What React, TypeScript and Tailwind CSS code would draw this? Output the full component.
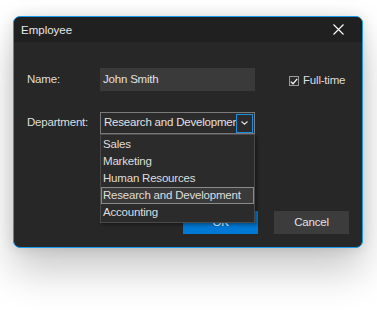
import React from "react";

const departments = [
  "Sales",
  "Marketing",
  "Human Resources",
  "Research and Development",
  "Accounting",
];

const selected = "Research and Development";

function CloseIcon() {
  return (
    <svg width="11" height="11" viewBox="0 0 11 11" aria-hidden>
      <path d="M0.5 0.5L10.5 10.5M10.5 0.5L0.5 10.5" stroke="#ffffff" strokeWidth="1.1" />
    </svg>
  );
}

function Chevron() {
  return (
    <svg width="7" height="4" viewBox="0 0 7 4" aria-hidden>
      <path d="M0.5 0.5L3.5 3.2L6.5 0.5" stroke="#e0e0e0" strokeWidth="1.1" fill="none" />
    </svg>
  );
}

function Check() {
  return (
    <svg width="8" height="7" viewBox="0 0 8 7" aria-hidden>
      <path d="M0.8 3.6L3 5.8L7.2 0.8" stroke="#ffffff" strokeWidth="1.3" fill="none" />
    </svg>
  );
}

export default function App() {
  return (
    <div
      className="h-[318px] w-[377px] overflow-hidden bg-white pl-[13px] pt-[16px] text-[11.5px] tracking-[-0.2px] text-[#dedede]"
      style={{ fontFamily: '"Liberation Sans", Arial, sans-serif' }}
    >
      <div className="relative flex h-[232px] w-[350px] flex-col overflow-visible rounded-[7px] border border-[#1a9af0] bg-[#272727] shadow-[0_22px_40px_rgba(0,0,0,0.22),0_0_14px_rgba(0,0,0,0.12)]">
        {/* Title bar */}
        <div className="flex h-[25px] items-center justify-between rounded-t-[6px] bg-[#202020] pl-[7px] pr-[18px]">
          <span className="pt-[2px] text-[11.5px] tracking-[0px] text-[#e8e8e8]">Employee</span>
          <CloseIcon />
        </div>

        {/* Body */}
        <div className="flex flex-1 flex-col px-[13px] pt-[26px]">
          <div className="flex h-[23px] items-center">
            <span className="w-[73px]">Name:</span>
            <div className="flex h-[23px] w-[155px] items-center bg-[#3a3a3a] pl-[3px] text-[#e2e2e2]">
              John Smith
            </div>
            <label className="ml-[34px] mt-[3px] flex items-center gap-[4px] whitespace-nowrap">
              <span className="flex h-[10px] w-[10px] items-center justify-center border border-[#9a9a9a] bg-[#2a2a2a]">
                <Check />
              </span>
              <span>Full-time</span>
            </label>
          </div>

          <div className="mt-[21px] flex items-start">
            <span className="w-[73px] pt-[2px]">Department:</span>
            <div className="relative">
              <div className="flex h-[22px] w-[155px] items-center overflow-hidden border border-[#7a7a7a] bg-[#2b2b2b]">
                <span className="flex-1 overflow-hidden whitespace-nowrap pl-[3px] text-[#e2e2e2]">
                  Research and Development
                </span>
                <span className="mr-[1px] flex h-[19px] w-[17px] shrink-0 items-center justify-center border border-[#1a8fe0] bg-[#2b2b2b]">
                  <Chevron />
                </span>
              </div>

              {/* Dropdown list */}
              <div className="absolute left-0 top-[22px] z-10 flex w-[155px] flex-col border border-[#4a4a4a] bg-[#2b2b2b] py-[1px] shadow-[2px_2px_3px_rgba(0,0,0,0.35)]">
                {departments.map((d) => (
                  <div
                    key={d}
                    className={
                      d === selected
                        ? "flex h-[17px] items-center border border-[#8a8a8a] bg-[#3a3a3a] pl-[1px]"
                        : "flex h-[17px] items-center border border-transparent pl-[1px]"
                    }
                  >
                    {d}
                  </div>
                ))}
              </div>
            </div>
          </div>

          <div className="mt-auto flex justify-end gap-[16px] pb-[13px]">
            <button className="h-[23px] w-[75px] bg-[#0078d4] text-[11.5px] text-white">OK</button>
            <button className="h-[23px] w-[75px] bg-[#3c3c3c] text-[11.5px] text-[#e2e2e2]">Cancel</button>
          </div>
        </div>
      </div>
    </div>
  );
}
